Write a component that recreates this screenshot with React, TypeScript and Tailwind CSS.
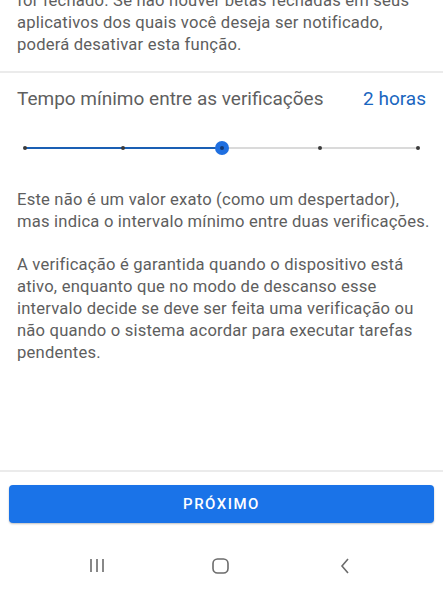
import React from 'react';

const ticks = [0, 25, 50, 75, 100];
const value = 50;

function StepSlider() {
  return (
    <div className="relative mx-[25px] h-[16px]">
      <div className="absolute left-0 right-0 top-[7px] h-[2px] bg-[#dadada]" />
      <div className="absolute left-0 top-[7px] h-[2px] bg-[#1a5fb4]" style={{ width: `${value}%` }} />
      {ticks.map(t => (
        <div
          key={t}
          className="absolute top-[6px] -ml-[2px] h-[4px] w-[4px] rounded-full bg-[#3a3a3a]"
          style={{ left: `${t}%` }}
        />
      ))}
      <div
        className="absolute top-[1px] -ml-[7px] flex h-[14px] w-[14px] items-center justify-center rounded-full bg-[#1f6fe0]"
        style={{ left: `${value}%` }}
      >
        <div className="h-[4px] w-[4px] rounded-full bg-[#123a78]" />
      </div>
    </div>
  );
}

export default function App() {
  return (
    <div
      className="flex h-[591px] w-[443px] flex-col overflow-hidden bg-white"
      style={{ fontFamily: 'Roboto, "Noto Sans", sans-serif' }}
    >
      <div className="flex-1">
        {/* intro text, scrolled */}
        <p className="-mt-[10px] px-[17px] text-[16.6px] leading-[22px] tracking-[0.2px] whitespace-nowrap text-[#5e5e5e]">
          for fechado. Se não houver betas fechadas em seus<br />
          aplicativos dos quais você deseja ser notificado,<br />
          poderá desativar esta função.
        </p>
        <div className="mt-[15px] h-[2px] bg-[#ebebeb]" />

        <div className="flex items-center justify-between px-[17px] pt-[14px]">
          <span className="text-[19px] leading-[24px] text-[#5f5f5f]">Tempo mínimo entre as verificações</span>
          <span className="text-[19px] leading-[24px] text-[#1a66c0]">2 horas</span>
        </div>

        <div className="mt-[29px]">
          <StepSlider />
        </div>

        <div className="mt-[33px] space-y-[21px] px-[17px] text-[16.6px] leading-[22px] tracking-[0.2px] whitespace-nowrap text-[#5e5e5e]">
          <p>
            Este não é um valor exato (como um despertador),<br />
            mas indica o intervalo mínimo entre duas verificações.
          </p>
          <p>
            A verificação é garantida quando o dispositivo está<br />
            ativo, enquanto que no modo de descanso esse<br />
            intervalo decide se deve ser feita uma verificação ou<br />
            não quando o sistema acordar para executar tarefas<br />
            pendentes.
          </p>
        </div>
      </div>

      <div className="h-[2px] bg-[#ebebeb]" />
      <div className="px-[9px] pt-[13px]">
        <button className="flex h-[38px] w-full items-center justify-center rounded-[4px] bg-[#1a73e8] text-[15px] font-medium tracking-[1.5px] text-white shadow-[0_1px_2px_rgba(0,0,0,0.25)]">
          PRÓXIMO
        </button>
      </div>

      {/* nav bar */}
      <div className="flex h-[68px] items-start pt-[35px] text-[#6b6b6b]">
        <svg className="ml-[88px]" width="18" height="15" viewBox="0 0 18 15" fill="none" stroke="currentColor" strokeWidth="1.6">
          <path d="M3 1v13M9 1v13M15 1v13" />
        </svg>
        <svg className="ml-[106px]" width="17" height="16" viewBox="0 0 17 16" fill="none" stroke="currentColor" strokeWidth="1.6">
          <rect x="1" y="1" width="15" height="14" rx="4.5" />
        </svg>
        <svg className="ml-[111px]" width="10" height="16" viewBox="0 0 10 16" fill="none" stroke="currentColor" strokeWidth="1.6">
          <path d="M8 1l-6 7 6 7" />
        </svg>
      </div>
    </div>
  );
}
